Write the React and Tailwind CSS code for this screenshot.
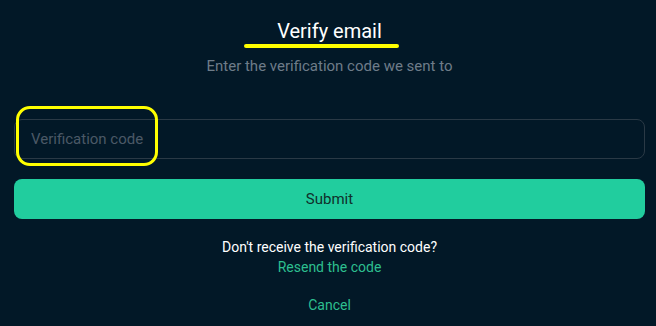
export default function App() {
  return (
    <div
      className="relative w-[656px] h-[326px] overflow-hidden bg-[#021827] pl-[14px]"
      style={{ fontFamily: 'Roboto, "Liberation Sans", sans-serif' }}
    >
      <div className="w-[631px]">
        <div className="flex flex-col items-center">
          <h1 className="mt-[17px] text-[20px] leading-[28px] text-white">Verify email</h1>
          <p className="mt-[10px] text-[15px] leading-[22px] text-[#6e7c89]">
            Enter the verification code we sent to
          </p>
        </div>

        <input
          type="text"
          placeholder="Verification code"
          className="mt-[42px] block w-full h-[40px] rounded-lg border border-[#2a3945] bg-transparent px-4 text-[15px] text-white placeholder:text-[#4b5966] outline-none"
        />

        <button className="mt-[20px] w-full h-[40px] rounded-lg bg-[#21cd9e] text-[15px] text-[#10302b]">
          Submit
        </button>

        <div className="flex flex-col items-center">
          <p className="mt-[18px] text-[14px] leading-[20px] text-white">
            Don't receive the verification code?
          </p>
          <button className="text-[14px] leading-[20px] text-[#2dbf8f]">Resend the code</button>
          <button className="mt-[18px] text-[14px] leading-[20px] text-[#2dbf8f]">Cancel</button>
        </div>
      </div>

      {/* annotation marks */}
      <div className="absolute left-[244px] top-[44px] w-[155px] h-[4px] rounded-full bg-[#ffff00]" />
      <div className="absolute left-[16px] top-[106px] w-[142px] h-[60px] rounded-[14px] border-[3px] border-[#ffff00]" />
    </div>
  );
}
